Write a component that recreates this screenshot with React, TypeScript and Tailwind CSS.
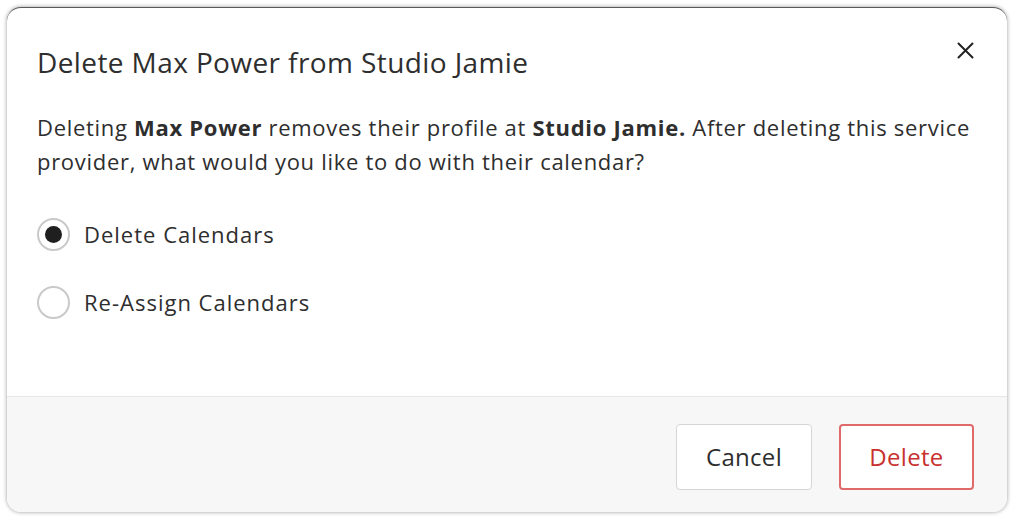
import React, { useState } from "react";

export default function App() {
  const [choice, setChoice] = useState<"delete" | "reassign">("delete");
  return (
    <div
      className="w-[1015px] h-[520px] bg-white pl-[7px] pt-[7px] overflow-hidden"
      style={{ fontFamily: "'Open Sans', 'Liberation Sans', sans-serif" }}
    >
      <div className="w-[1000px] h-[505px] rounded-[14px] bg-white border-t border-t-[#5a5a5a] shadow-[0_0_4px_rgba(0,0,0,0.4)] flex flex-col overflow-hidden text-[#2e2e2e]">
        <div className="flex-1 px-[30px] pt-[37px] relative">
          <h1 className="text-[28px] leading-[34px] font-normal tracking-[0.4px]">Delete Max Power from Studio Jamie</h1>
          <button className="absolute right-[33px] top-[34px] w-[17px] h-[17px] text-[#222]" aria-label="Close">
            <svg viewBox="0 0 17 17" width="17" height="17" fill="none" stroke="currentColor" strokeWidth="2" strokeLinecap="round">
              <path d="M1.5 1.5L15.5 15.5M15.5 1.5L1.5 15.5" />
            </svg>
          </button>
          <p className="mt-[31px] text-[22px] leading-[34px] tracking-[0.7px]">
            Deleting <b className="font-bold">Max Power</b> removes their profile at <b className="font-bold">Studio Jamie.</b> After deleting this service provider, what would you like to do with their calendar?
          </p>
          <div className="mt-[40px] flex flex-col gap-[35px]">
            <label className="flex items-center gap-[14px] cursor-pointer" onClick={() => setChoice("delete")}>
              <span className="w-[33px] h-[33px] rounded-full border-2 border-[#c9c9c9] flex items-center justify-center">
                {choice === "delete" && <span className="w-[17px] h-[17px] rounded-full bg-[#1f1f1f]" />}
              </span>
              <span className="text-[22px] leading-[33px] tracking-[1px]">Delete Calendars</span>
            </label>
            <label className="flex items-center gap-[14px] cursor-pointer" onClick={() => setChoice("reassign")}>
              <span className="w-[33px] h-[33px] rounded-full border-2 border-[#c9c9c9] flex items-center justify-center">
                {choice === "reassign" && <span className="w-[17px] h-[17px] rounded-full bg-[#1f1f1f]" />}
              </span>
              <span className="text-[22px] leading-[33px] tracking-[1px]">Re-Assign Calendars</span>
            </label>
          </div>
        </div>
        <div className="h-[116px] border-t border-[#e6e6e6] bg-[#f7f7f7] flex items-center justify-end gap-[27px] pr-[33px] pt-[5px]">
          <button className="w-[136px] h-[66px] rounded-[4px] border border-[#d6d6d6] bg-white text-[24px] tracking-[0.3px] text-[#2e2e2e]">Cancel</button>
          <button className="w-[135px] h-[66px] rounded-[4px] border-2 border-[#e06a6a] bg-white text-[24px] tracking-[0.3px] text-[#c8312f]">Delete</button>
        </div>
      </div>
    </div>
  );
}
